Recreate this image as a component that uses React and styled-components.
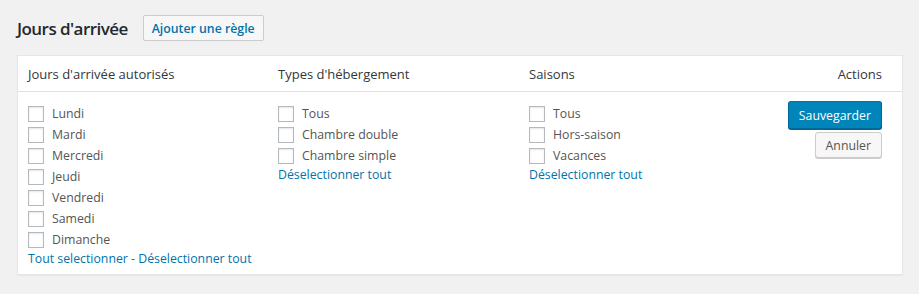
import React, { useState } from 'react';
import styled, { createGlobalStyle } from 'styled-components';

const GlobalStyle = createGlobalStyle`
  html, body {
    margin: 0;
    background: #f1f1f1;
    font-family: "Open Sans", "Noto Sans", sans-serif;
    font-size: 12.3px;
    color: #444;
  }
`;

const Wrap = styled.div`
  padding: 15px 16px 18px 17px;
`;

const PageHeader = styled.div`
  display: flex;
  align-items: center;
  gap: 15px;
  margin-bottom: 14px;
`;

const Title = styled.h2`
  margin: 0;
  font-size: 17px;
  font-weight: 600;
  letter-spacing: -0.55px;
  color: #23282d;
`;

const TitleAction = styled.button`
  height: 26px;
  padding: 0 8px;
  border: 1px solid #ccc;
  border-radius: 2px;
  background: #f7f7f7;
  color: #0073aa;
  font-family: inherit;
  font-size: 12.3px;
  font-weight: 600;
  cursor: pointer;
`;

const Card = styled.div`
  background: #fff;
  border: 1px solid #e5e5e5;
  box-shadow: 0 1px 1px rgba(0, 0, 0, 0.04);
`;

const Row = styled.div`
  display: grid;
  grid-template-columns: 250px 251px 1fr 132px;
`;

const HeadRow = styled(Row)`
  height: 35px;
  align-items: center;
  border-bottom: 1px solid #e1e1e1;
  color: #32373c;
  font-size: 13px;
`;

const HeadCell = styled.div`
  padding: 0 ${p => (p.$right ? '20px' : '10px')};
  text-align: ${p => (p.$right ? 'right' : 'left')};
`;

const BodyRow = styled(Row)`
  padding: 11px 0 7px;
  align-items: start;
`;

const Cell = styled.div`
  padding: 0 10px;
  display: flex;
  flex-direction: column;
`;

const ActionCell = styled.div`
  margin-top: -2px;
  padding: 0 20px 0 0;
  display: flex;
  flex-direction: column;
  align-items: flex-end;
  gap: 3px;
`;

const Item = styled.label`
  display: flex;
  align-items: center;
  gap: 8px;
  height: 21px;
  color: #555;
  cursor: pointer;
`;

const Box = styled.span`
  width: 16px;
  height: 16px;
  box-sizing: border-box;
  border: 1px solid #b4b9be;
  background: #fff;
  box-shadow: inset 0 1px 2px rgba(0, 0, 0, 0.1);
  display: flex;
  align-items: center;
  justify-content: center;
  color: #1e8cbe;
  font-size: 14px;
  line-height: 1;
  flex-shrink: 0;
`;

const Links = styled.div`
  line-height: 17px;
  color: #0073aa;
  white-space: nowrap;
`;

const Link = styled.a`
  color: #0073aa;
  text-decoration: none;
  cursor: pointer;
`;

const Button = styled.button`
  box-sizing: border-box;
  font-family: inherit;
  font-size: 12.3px;
  border-radius: 3px;
  padding: 0 10px;
  cursor: pointer;
  height: ${p => (p.$primary ? '28px' : '26px')};
  background: ${p => (p.$primary ? '#0085ba' : '#f7f7f7')};
  color: ${p => (p.$primary ? '#fff' : '#555')};
  border-style: solid;
  border-width: 1px;
  border-color: ${p => (p.$primary ? '#0073aa #006799 #006799' : '#ccc')};
  box-shadow: ${p => (p.$primary ? '0 1px 0 #006799' : '0 1px 0 #ccc')};
`;

const days = ['Lundi', 'Mardi', 'Mercredi', 'Jeudi', 'Vendredi', 'Samedi', 'Dimanche'];
const rooms = ['Tous', 'Chambre double', 'Chambre simple'];
const seasons = ['Tous', 'Hors-saison', 'Vacances'];

function CheckList({ items, checked, toggle }) {
  return items.map(name => (
    <Item key={name} onClick={() => toggle(name)}>
      <Box>{checked[name] ? '✓' : ''}</Box>
      {name}
    </Item>
  ));
}

export default function App() {
  const [checked, setChecked] = useState({});
  const toggle = key => setChecked(c => ({ ...c, [key]: !c[key] }));
  const setAll = (list, prefix, val) =>
    setChecked(c => {
      const n = { ...c };
      list.forEach(i => (n[prefix + i] = val));
      return n;
    });

  const scoped = (list, prefix) =>
    list.reduce((o, i) => ({ ...o, [i]: checked[prefix + i] }), {});

  return (
    <Wrap>
      <GlobalStyle />
      <PageHeader>
        <Title>Jours d'arrivée</Title>
        <TitleAction>Ajouter une règle</TitleAction>
      </PageHeader>
      <Card>
        <HeadRow>
          <HeadCell>Jours d'arrivée autorisés</HeadCell>
          <HeadCell>Types d'hébergement</HeadCell>
          <HeadCell>Saisons</HeadCell>
          <HeadCell $right>Actions</HeadCell>
        </HeadRow>
        <BodyRow>
          <Cell>
            <CheckList items={days} checked={scoped(days, 'd-')} toggle={n => toggle('d-' + n)} />
            <Links>
              <Link onClick={() => setAll(days, 'd-', true)}>Tout selectionner</Link> -{' '}
              <Link onClick={() => setAll(days, 'd-', false)}>Déselectionner tout</Link>
            </Links>
          </Cell>
          <Cell>
            <CheckList items={rooms} checked={scoped(rooms, 'r-')} toggle={n => toggle('r-' + n)} />
            <Links>
              <Link onClick={() => setAll(rooms, 'r-', false)}>Déselectionner tout</Link>
            </Links>
          </Cell>
          <Cell>
            <CheckList items={seasons} checked={scoped(seasons, 's-')} toggle={n => toggle('s-' + n)} />
            <Links>
              <Link onClick={() => setAll(seasons, 's-', false)}>Déselectionner tout</Link>
            </Links>
          </Cell>
          <ActionCell>
            <Button $primary>Sauvegarder</Button>
            <Button>Annuler</Button>
          </ActionCell>
        </BodyRow>
      </Card>
    </Wrap>
  );
}
